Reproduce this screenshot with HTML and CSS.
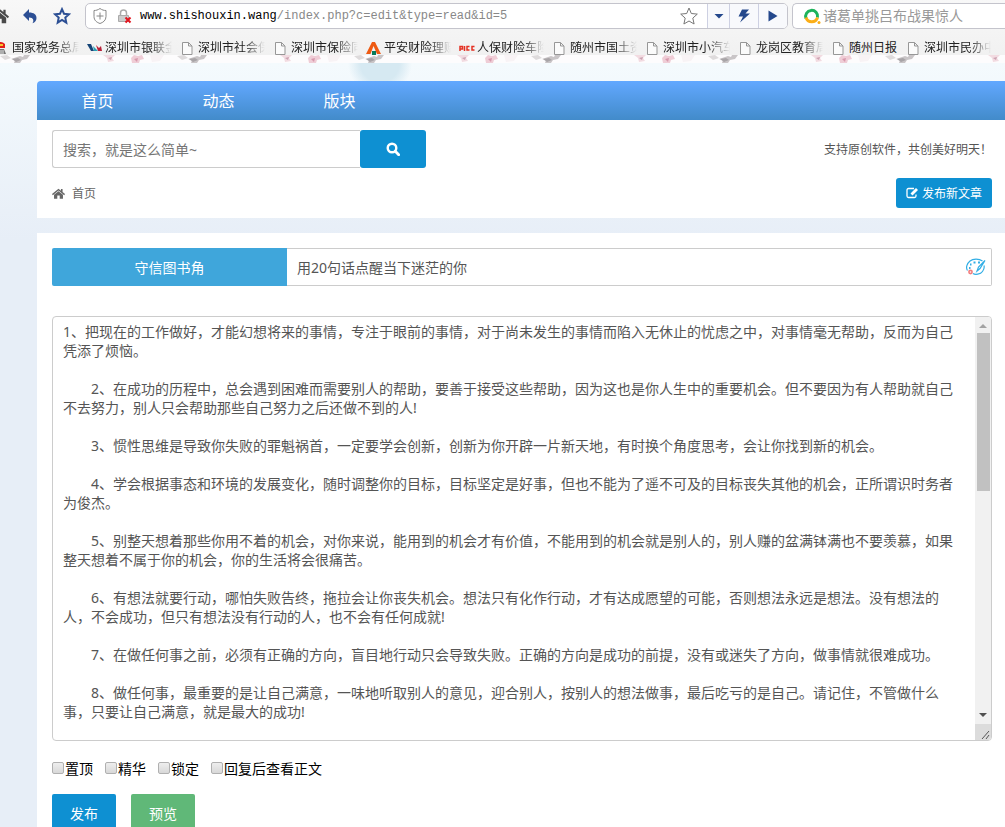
FILE: index.html
```
<!DOCTYPE html>
<html lang="zh-CN">

<head>
    <meta charset="UTF-8">
    <meta name="viewport" content="width=device-width, initial-scale=1.0">
    <title>守信图书角</title>
    <link rel="stylesheet" href="styles.css">
</head>

<body>

    <!-- shared icons -->
    <svg class="sprite" aria-hidden="true">
        <symbol id="page" viewBox="0 0 16 16">
            <path d="M2.500 2.500h6l3.500 3.500v8.500h-9.500z M8.500 2.500v3.500h3.500" fill="#fbfbfb" stroke="#979797" />
        </symbol>
        <symbol id="home" viewBox="0 0 16 16">
            <path d="M8 2L0 8.500l1 1.500L8 4.200l7 5.800 1-1.500L13 6V2.500h-2v2z" />
            <path d="M8 5.200L2.500 9.600V14.500h4v-4h3v4h4V9.600z" />
        </symbol>
    </svg>

    <header class="browser">
        <div class="toolbar">
            <button class="tool tool-home" aria-label="主页">
                <svg width="18" height="18" viewBox="0 0 16 16" fill="#4a4a4a"><use href="#home" /></svg>
            </button>
            <button class="tool" aria-label="后退">
                <svg width="16" height="16" viewBox="0 0 16 16" fill="#2c4f94">
                    <path d="M7 1v3.500c5 0 7.500 2.200 7.500 5.500 0 2.500-1.500 4.500-4 5.200 1.500-2.200 1.300-5.700-3.500-5.700V13L1 7z" />
                </svg>
            </button>
            <button class="tool" aria-label="收藏">
                <svg width="18" height="18" viewBox="0 0 18 18" fill="none" stroke="#2c4f94" stroke-width="2">
                    <path d="M9 2.200l2 4.500 5 .5-3.700 3.400 1 5L9 13l-4.300 2.600 1-5L2 7.200l5-.5z" />
                </svg>
            </button>
            <div class="address">
                <svg width="16" height="18" viewBox="0 0 16 18" fill="none" stroke="#888">
                    <path d="M8 1.500c2 1.500 4 2 6 2v6c0 4-3 6-6 7-3-1-6-3-6-7v-6c2 0 4-.5 6-2zM8 5.500v7M4.500 9h7" />
                </svg>
                <svg width="16" height="16" viewBox="0 0 16 16" fill="none">
                    <path d="M4.500 8V5a3 3 0 0 1 6 0v3" stroke="#aaa" stroke-width="1.500" />
                    <path d="M2.500 7.500h10v6h-10z" fill="#ccc" stroke="#aaa" />
                    <path d="M9.500 9.500l5 5M14.500 9.500l-5 5" stroke="#e1141e" stroke-width="2" />
                </svg>
                <a class="url" href="#"><span>www.shishouxin.wang</span>/index.php?c=edit&amp;type=read&amp;id=5</a>
                <button class="bar-button bar-star" aria-label="加入收藏">
                    <svg width="20" height="20" viewBox="0 0 20 20" fill="#fff" stroke="#777">
                        <path d="M10 2l2.300 5.500 6 .6-4.500 4 1.300 5.900L10 15l-5.100 3 1.300-5.900-4.500-4 6-.6z" />
                    </svg>
                </button>
                <button class="bar-button bar-drop" aria-label="更多">
                    <svg width="10" height="6" viewBox="0 0 10 6" fill="#24488c"><path d="M0.500 1h9L5 5.500z" /></svg>
                </button>
                <button class="bar-button bar-flash" aria-label="极速模式">
                    <svg width="14" height="16" viewBox="0 0 14 16" fill="#24488c">
                        <path d="M5 1.500h7L8.500 5.500H13L3 14.500l3-6H1.500z" />
                    </svg>
                </button>
                <button class="bar-button bar-go" aria-label="转到">
                    <svg width="12" height="14" viewBox="0 0 12 14" fill="#24488c"><path d="M1.500 1.500L10.500 7l-9 5.500z" /></svg>
                </button>
            </div>
            <div class="quick-search">
                <svg width="18" height="18" viewBox="0 0 18 18" fill="none" stroke-width="3">
                    <path d="M3 11.500a6 6 0 1 1 11.500-1" stroke="#1eb35b" />
                    <path d="M3 10.500a6 6 0 0 0 11.500 0" stroke="#fbae17" />
                    <circle cx="16" cy="15.500" r="1.500" fill="#fbae17" />
                </svg>
                <input type="text" aria-label="快速搜索" placeholder="诸葛单挑吕布战果惊人">
            </div>
        </div>

        <nav class="bookmarks">
            <a href="#">
                <svg width="16" height="16" viewBox="0 0 16 16">
                    <path d="M2 4q5-4 9 0v4H2z" fill="#e32119" />
                    <path d="M5 4h4v2H5z" fill="#f6c52e" />
                    <path d="M3 9h7l2 5H2z" fill="#777" />
                    <path d="M4 11h6M5 13h5" stroke="#e7e7e7" />
                </svg><span>国家税务总局</span></a>
            <a href="#">
                <svg width="16" height="16" viewBox="0 0 16 16">
                    <path d="M0 4h4l3 7H4z" fill="#154477" />
                    <path d="M6 6l5 5H7z" fill="#25a1b7" />
                    <path d="M9 5l3 3 2-2 1 5h-4z" fill="#b92138" />
                </svg><span>深圳市银联金</span></a>
            <a href="#"><svg width="16" height="16"><use href="#page" /></svg><span>深圳市社会保</span></a>
            <a href="#"><svg width="16" height="16"><use href="#page" /></svg><span>深圳市保险同</span></a>
            <a href="#">
                <svg width="16" height="16" viewBox="0 0 16 16">
                    <path d="M6 2h3l6 12h-4L7.500 6l-3 8H0z" fill="#ee5a12" />
                    <path d="M6 11h4v4H6z" fill="#087b5a" />
                </svg><span>平安财险理赔</span></a>
            <a href="#">
                <svg width="16" height="16" viewBox="0 0 16 16" fill="none" stroke="#e43123" stroke-width="1.500">
                    <path d="M1 11V6.500h2.500V9H1M5.500 6v5M10.500 6.500H8v3.500h2.500M15.500 6.500H13v3.500h2.500" />
                </svg><span>人保财险车险</span></a>
            <a href="#"><svg width="16" height="16"><use href="#page" /></svg><span>随州市国土资</span></a>
            <a href="#"><svg width="16" height="16"><use href="#page" /></svg><span>深圳市小汽车</span></a>
            <a href="#"><svg width="16" height="16"><use href="#page" /></svg><span>龙岗区教育局</span></a>
            <a class="short" href="#"><svg width="16" height="16"><use href="#page" /></svg><span>随州日报</span></a>
            <a href="#"><svg width="16" height="16"><use href="#page" /></svg><span>深圳市民办中</span></a>
        </nav>

        <!-- plum blossom edge under the bookmarks -->
        <svg class="blossom" width="100%" height="8" aria-hidden="true">
            <defs>
                <pattern id="plum" width="177" height="8" patternUnits="userSpaceOnUse">
                    <path d="M0 1l7-1 4 3-6 2z" fill="#dedbdc" />
                    <path d="M14 3l6-2 3 1 1-2h6l-3 4-5 1-2 3h-6l1-3-4-1z" fill="#c9c5c7" />
                    <path d="M12 4l6-1 3 2-5 2z" fill="#a8a4a7" />
                    <path d="M103 0h12l-3 3 2 3-6 1-1-4z" fill="#f2dbe1" />
                    <path d="M108 3l4-1-1 3z" fill="#cda3b2" />
                    <path d="M131 3l3-3 4 1 4-1 2 4-4 1-1 3h-7z" fill="#efcdd6" />
                    <path d="M134 4l4-1-1 4z" fill="#d899ad" />
                    <path d="M150 0h14l-4 6-8 1z" fill="#f8f3f5" />
                </pattern>
            </defs>
            <rect width="100%" height="8" fill="url(#plum)" />
        </svg>
    </header>

    <main class="container">
        <section class="panel top-panel">
            <nav class="main-nav">
                <a href="#">首页</a>
                <a href="#">动态</a>
                <a href="#">版块</a>
            </nav>
            <div class="row">
                <form class="search">
                    <input type="text" aria-label="搜索" placeholder="搜索，就是这么简单~">
                    <button type="button" aria-label="搜索">
                        <svg width="14" height="14" viewBox="0 0 14 14" fill="none" stroke="#fff">
                            <circle cx="6" cy="6" r="4.300" stroke-width="2.400" />
                            <path d="M9.300 9.300l3.400 3.400" stroke-width="2.800" stroke-linecap="round" />
                        </svg>
                    </button>
                </form>
                <p class="slogan">支持原创软件，共创美好明天！</p>
            </div>
            <div class="row">
                <a class="crumb" href="#">
                    <svg width="13" height="13" viewBox="0 0 16 16" fill="#666"><use href="#home" /></svg>
                    首页
                </a>
                <button class="new-post">
                    <svg width="13" height="12" viewBox="0 0 13 12" fill="none" stroke="#fff">
                        <path d="M8 1.500H2.500a1.500 1.500 0 0 0-1.500 1.500v6a1.500 1.500 0 0 0 1.500 1.500h6A1.500 1.500 0 0 0 10 9V7.500" stroke-width="1.300" />
                        <path d="M5.500 7.500L11 2" stroke-width="2.800" />
                    </svg>
                    发布新文章
                </button>
            </div>
        </section>

        <form class="panel editor">
            <div class="title-row">
                <button type="button" class="board">守信图书角</button>
                <div class="title-box">
                    <input type="text" aria-label="标题" value="用20句话点醒当下迷茫的你">
                    <button type="button" class="palette" aria-label="标题颜色">
                        <svg width="20" height="18" viewBox="0 0 20 18" fill="none" stroke="#32aee5" stroke-width="1.200">
                            <path d="M16.500 3C13 .5 7 .5 4 3S-.5 9.500 1.500 12.500M7 15.500c2 1.500 7.500 1 9.500-2 1.500-2 2-4 1.500-6" />
                            <path d="M19 2.500l-6.500 6.500-1.500 4 3-2.500z" />
                            <path d="M7.500 4.500h2M12 4.500h2M4 6.500h1.500M3 10h1.500" stroke-width="2" />
                            <circle cx="4.500" cy="14" r="1.600" stroke="#f27d7d" stroke-width="1.600" />
                        </svg>
                    </button>
                </div>
            </div>

            <div class="content-box">
                <textarea aria-label="正文">1、把现在的工作做好，才能幻想将来的事情，专注于眼前的事情，对于尚未发生的事情而陷入无休止的忧虑之中，对事情毫无帮助，反而为自己凭添了烦恼。

　　2、在成功的历程中，总会遇到困难而需要别人的帮助，要善于接受这些帮助，因为这也是你人生中的重要机会。但不要因为有人帮助就自己不去努力，别人只会帮助那些自己努力之后还做不到的人!

　　3、惯性思维是导致你失败的罪魁祸首，一定要学会创新，创新为你开辟一片新天地，有时换个角度思考，会让你找到新的机会。

　　4、学会根据事态和环境的发展变化，随时调整你的目标，目标坚定是好事，但也不能为了遥不可及的目标丧失其他的机会，正所谓识时务者为俊杰。

　　5、别整天想着那些你用不着的机会，对你来说，能用到的机会才有价值，不能用到的机会就是别人的，别人赚的盆满钵满也不要羡慕，如果整天想着不属于你的机会，你的生活将会很痛苦。

　　6、有想法就要行动，哪怕失败告终，拖拉会让你丧失机会。想法只有化作行动，才有达成愿望的可能，否则想法永远是想法。没有想法的人，不会成功，但只有想法没有行动的人，也不会有任何成就!

　　7、在做任何事之前，必须有正确的方向，盲目地行动只会导致失败。正确的方向是成功的前提，没有或迷失了方向，做事情就很难成功。

　　8、做任何事，最重要的是让自己满意，一味地听取别人的意见，迎合别人，按别人的想法做事，最后吃亏的是自己。请记住，不管做什么事，只要让自己满意，就是最大的成功!</textarea>
                <div class="scrollbar" aria-hidden="true">
                    <svg width="16" height="16" fill="#a3a3a3"><path d="M4 11h8L8 7z" /></svg>
                    <div class="track">
                        <div class="thumb"></div>
                    </div>
                    <svg width="16" height="16" fill="#505050"><path d="M4 5h8L8 9z" /></svg>
                    <svg class="grip" width="16" height="16" stroke="#555"><path d="M7 15l7-8M11 15l3-4" /></svg>
                </div>
            </div>

            <div class="options">
                <label><input type="checkbox">置顶</label>
                <label><input type="checkbox">精华</label>
                <label><input type="checkbox">锁定</label>
                <label><input type="checkbox">回复后查看正文</label>
            </div>

            <div class="actions">
                <button type="button" class="publish">发布</button>
                <button type="button" class="preview">预览</button>
            </div>
        </form>
    </main>

</body>

</html>
```
FILE: styles.css
```
* {
    box-sizing: border-box;
}

body {
    margin: 0;
    height: 100vh;
    overflow: hidden;
    font-family: "Noto Sans", "Noto Sans CJK SC", sans-serif;
    font-size: 14px;
    color: #555;
    background: radial-gradient(ellipse 32px 30px at 380px 64px, #d6e9f2 60%, transparent),
        linear-gradient(#f4fafd 64px, #e7eef7 240px);
}

a {
    color: inherit;
    text-decoration: none;
}

button,
input,
textarea {
    font: inherit;
    color: inherit;
    margin: 0;
    padding: 0;
    border: none;
    background: none;
    outline: none;
}

button {
    cursor: pointer;
}

svg {
    display: block;
    flex: none;
}

.sprite {
    position: absolute;
    width: 0;
    height: 0;
}

/* browser bar */
.browser {
    background: linear-gradient(#f8f8f8, #f0f0f0);
}

.toolbar {
    display: flex;
    align-items: center;
    height: 32px;
    overflow: hidden;
}

.tool {
    flex: none;
    display: flex;
    justify-content: center;
    width: 32px;
}

.tool-home {
    width: 14px;
    justify-content: flex-end;
    padding-right: 5px;
}

.address {
    display: flex;
    align-items: center;
    flex: 1;
    height: 26px;
    margin: 0 4px 0 7px;
    padding-left: 6px;
    gap: 8px;
    border: 1px solid #c4c4cc;
    border-radius: 5px;
    background: #fff;
}

.url {
    flex: 1;
    font-family: "Liberation Mono", monospace;
    font-size: 12px;
    color: #888;
    white-space: nowrap;
}

.url span {
    color: #000;
}

.bar-button {
    display: flex;
    align-items: center;
    justify-content: center;
    height: 24px;
    margin-left: -8px;
    border-left: 1px solid #cdd0e2;
    background: #f8f9fc;
}

.bar-star {
    width: 37px;
    border: none;
    background: none;
}

.bar-drop {
    width: 22px;
}

.bar-flash,
.bar-go {
    width: 29px;
    border-radius: 0 4px 4px 0;
}

.bar-flash {
    border-radius: 0;
}

.quick-search {
    display: flex;
    align-items: center;
    width: 213px;
    height: 26px;
    padding-left: 10px;
    gap: 2px;
    border: 1px solid #c4c4cc;
    border-right: none;
    border-radius: 5px 0 0 5px;
    background: #fff;
}

.quick-search input {
    flex: 1;
    min-width: 0;
    line-height: 20px;
}

.quick-search input::placeholder {
    color: #999;
    opacity: 1;
}

.bookmarks {
    display: flex;
    height: 23px;
    padding-top: 8px;
    margin-left: -6px;
}

.bookmarks a {
    flex: none;
    display: flex;
    align-items: center;
    gap: 2px;
    width: 93px;
    height: 16px;
    padding-right: 8px;
    font-size: 12px;
    line-height: 18px;
    color: #222;
}

.bookmarks a.short {
    width: 75px;
}

.bookmarks span {
    overflow: hidden;
    white-space: nowrap;
    -webkit-mask-image: linear-gradient(to right, #000 45px, transparent);
    mask-image: linear-gradient(to right, #000 45px, transparent);
}

.bookmarks .short span {
    -webkit-mask-image: none;
    mask-image: none;
}

.blossom {
    background: #fdfcfd;
}

/* page */
.container {
    margin: 18px 0 0 37px;
}

.panel {
    margin-bottom: 15px;
    background: #fff;
}

.top-panel {
    padding-bottom: 10px;
    border-radius: 4px 0 0 0;
}

.main-nav {
    display: flex;
    height: 39px;
    background: linear-gradient(#62a8ff, #428bca);
    border-radius: 4px 0 0 0;
}

.main-nav a {
    width: 121px;
    font-size: 16px;
    line-height: 40px;
    text-align: center;
    color: #fff;
}

.row {
    display: flex;
    align-items: center;
    justify-content: space-between;
    padding: 10px 13px 0 15px;
}

.search {
    display: flex;
    width: 374px;
}

.search input {
    flex: 1;
    height: 38px;
    padding: 0 10px;
    border: 1px solid #ccc;
    border-right: none;
    border-radius: 3px 0 0 3px;
}

.search input::placeholder {
    color: #757575;
    opacity: 1;
}

.search button {
    display: flex;
    align-items: center;
    justify-content: center;
    width: 66px;
    background: #0e90d2;
    border-radius: 3px;
}

.slogan {
    margin: 0;
    font-size: 12px;
}

.crumb {
    display: flex;
    align-items: center;
    gap: 7px;
    font-size: 12px;
    color: #666;
}

.new-post {
    display: flex;
    align-items: center;
    gap: 3px;
    height: 30px;
    padding: 0 10px;
    font-size: 12px;
    color: #fff;
    background: #0e90d2;
    border-radius: 3px;
}

.editor {
    padding: 15px 13px 15px 15px;
}

.title-row {
    display: flex;
    height: 38px;
}

.board {
    width: 25%;
    color: #fff;
    background: #3fa6db;
    border-radius: 2px 0 0 2px;
}

.title-box {
    display: flex;
    align-items: center;
    flex: 1;
    padding: 0 5px 0 10px;
    border: 1px solid #ccc;
    border-left: none;
    border-radius: 0 2px 2px 0;
}

.title-box input {
    flex: 1;
}

.content-box {
    display: flex;
    height: 425px;
    margin-top: 30px;
    border: 1px solid #ccc;
    border-radius: 4px;
    overflow: hidden;
}

.content-box textarea {
    flex: 1;
    padding: 5px 10px;
    line-height: 19px;
    resize: none;
}

.scrollbar {
    display: flex;
    flex-direction: column;
    width: 16px;
    background: #f1f1f1;
}

.track {
    flex: 1;
    padding: 0 1px 0 2px;
}

.thumb {
    height: 42%;
    background: #c1c1c1;
}

.grip {
    background: #dcdcdc;
}

.options {
    display: flex;
    gap: 12px;
    margin-top: 18px;
    line-height: 20px;
    color: #000;
}

.options label {
    display: flex;
}

.options input {
    appearance: none;
    width: 12px;
    height: 12px;
    margin: 3px 1px 0 0;
    border: 1px solid #b0b0b0;
    border-radius: 2px;
    background: linear-gradient(#eee, #d8d8d8);
}

.options input:checked {
    background: #0e90d2;
}

.actions {
    display: flex;
    gap: 15px;
    margin-top: 15px;
}

.actions button {
    width: 64px;
    height: 38px;
    color: #fff;
    border-radius: 2px;
}

.publish {
    background: #0e90d2;
}

.preview {
    background: #60b878;
}
```
